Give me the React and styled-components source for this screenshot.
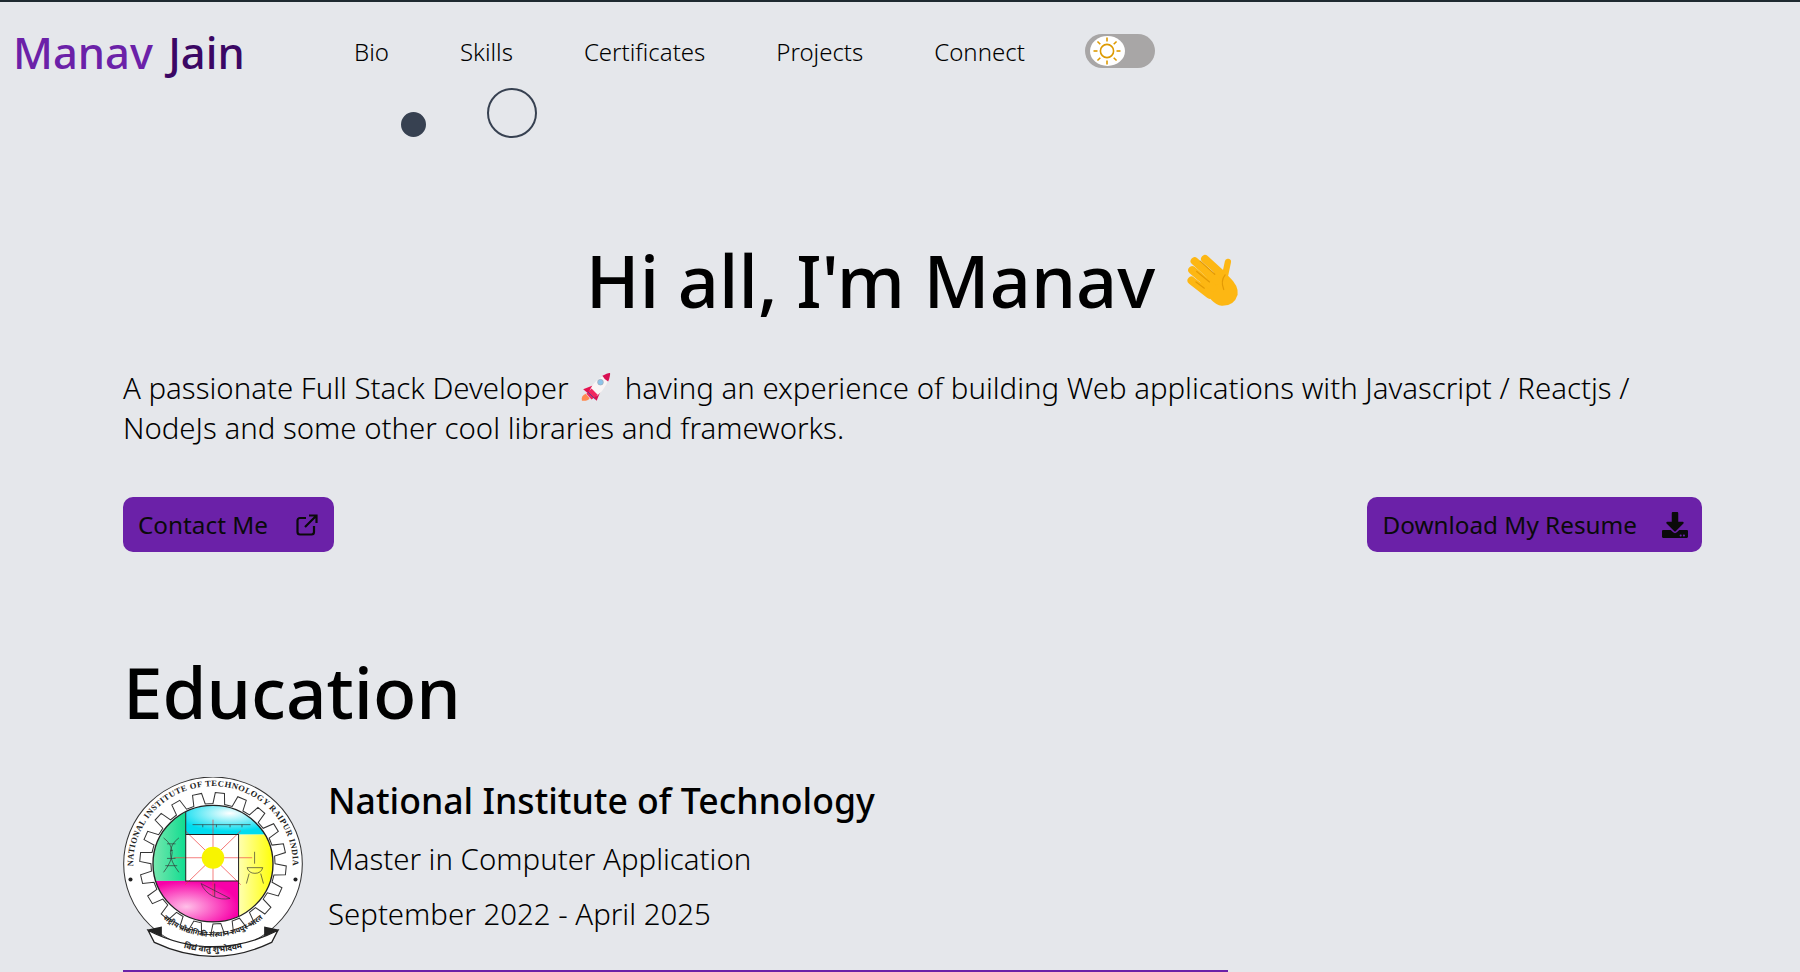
import React from 'react';
import styled, { createGlobalStyle } from 'styled-components';
import { FaDownload } from 'react-icons/fa';

const GlobalStyle = createGlobalStyle`
  html, body {
    margin: 0;
    padding: 0;
    background: #e5e7eb;
    overflow: hidden;
    font-family: 'Noto Sans', 'Open Sans', sans-serif;
    color: #0a0a0a;
  }
`;

const Page = styled.div`
  position: relative;
  height: 972px;
  overflow: hidden;
  box-sizing: border-box;
  border-top: 2px solid #1f2a30;
`;

const Header = styled.header`
  display: flex;
  align-items: center;
  height: 98px;
  padding-left: 13px;
`;

const Logo = styled.div`
  width: 341px;
  margin-top: 2px;
  font-size: 43.5px;
  font-weight: 500;
  word-spacing: 4px;
  color: #6b21a8;
  span {
    color: #3b0764;
  }
`;

const Nav = styled.nav`
  display: flex;
  align-items: center;
  gap: 71px;
  font-size: 24px;
`;

const NavLink = styled.a`
  color: #000;
  font-weight: 300;
`;

const Toggle = styled.div`
  display: flex;
  align-items: center;
  box-sizing: border-box;
  width: 70px;
  height: 34px;
  margin-left: -11px;
  padding-left: 5px;
  border-radius: 17px;
  background: #a8a6a6;
`;

const Knob = styled.div`
  display: flex;
  align-items: center;
  justify-content: center;
  width: 35px;
  height: 30px;
  border-radius: 50%;
  background: #fff;
`;

const Blob = styled.div`
  position: absolute;
  left: ${(p) => p.$left}px;
  top: ${(p) => p.$top}px;
  width: ${(p) => p.$size}px;
  height: ${(p) => p.$size}px;
  box-sizing: border-box;
  border-radius: 50%;
  border: 2px solid #374151;
  background: ${(p) => (p.$filled ? '#374151' : 'transparent')};
`;

const Main = styled.main`
  padding: 0 98px 0 123px;
`;

const Hero = styled.section`
  padding-top: 132px;
`;

const Title = styled.h1`
  display: flex;
  justify-content: center;
  align-items: center;
  gap: 32px;
  margin: 0;
  font-size: 72px;
  line-height: 96px;
  font-weight: 500;
  color: #000;
`;

const Intro = styled.p`
  margin: 40px 0 0;
  font-size: 29.4px;
  line-height: 40px;
  font-weight: 300;
  color: #000;
`;

const Inline = styled.span`
  display: inline-block;
  height: 30px;
  vertical-align: -4px;
  margin: -4px 5px -4px 4px;
`;

const Buttons = styled.div`
  display: flex;
  justify-content: space-between;
  margin-top: 49px;
`;

const Button = styled.a`
  display: flex;
  align-items: center;
  gap: ${(p) => p.$gap}px;
  height: 55px;
  padding: 0 ${(p) => p.$right}px 0 15px;
  border-radius: 10px;
  background: #6b21a8;
  color: #0a0a0a;
  font-size: 24.3px;
`;

const Education = styled.section`
  margin-top: 88px;
`;

const Heading = styled.h2`
  margin: 0;
  font-size: 71px;
  line-height: 104px;
  font-weight: 500;
  color: #000;
`;

const School = styled.div`
  display: flex;
  gap: 25px;
  width: 1105px;
  margin-top: 33px;
  padding-bottom: 12px;
  border-bottom: 2px solid #6b21a8;
`;

const SchoolInfo = styled.div`
  display: flex;
  flex-direction: column;
  margin-top: -2px;
`;

const SchoolName = styled.div`
  font-size: 35.6px;
  line-height: 50px;
  font-weight: 500;
  color: #000;
`;

const SchoolLine = styled.div`
  margin-top: ${(p) => p.$top}px;
  font-size: 29.4px;
  line-height: 49px;
  font-weight: 300;
  color: #000;
`;

const SunIcon = () => (
  <svg width="30" height="30" viewBox="-15 -15 30 30" fill="none" stroke="#dd9a00" strokeWidth="1.6">
    <circle r="6.6" />
    {[0, 45, 90, 135, 180, 225, 270, 315].map((a) => (
      <line key={a} x1="0" y1="-9.5" x2="0" y2="-13.5" transform={`rotate(${a})`} />
    ))}
  </svg>
);

const ExternalIcon = () => (
  <svg width="22" height="22" viewBox="0 0 22 22" fill="none" stroke="#0a0a0a" strokeWidth="2.2">
    <path d="M10 4H4a2.5 2.5 0 0 0-2.5 2.5V18A2.5 2.5 0 0 0 4 20.500h11.500A2.500 2.500 0 0 0 18 18v-6" />
    <path d="M9 13 L20 2 M13 1.500 H20.500 V9" />
  </svg>
);

const WaveHand = () => (
  <svg width="52" height="54" viewBox="80 45 150 155" fill="none" strokeLinecap="round">
    <path d="M118 130 L165 95 L200 112 Q230 140 226 165 Q216 198 180 197 Q150 195 118 130Z" fill="#fdb713" />
    <g stroke="#fdb713" strokeWidth="23">
      <line x1="102" y1="68" x2="165" y2="125" />
      <line x1="132" y1="62" x2="185" y2="110" />
      <line x1="95" y1="94" x2="155" y2="145" />
      <line x1="93" y1="124" x2="145" y2="165" />
      <line x1="198" y1="70" x2="188" y2="118" strokeWidth="18" />
    </g>
    <g stroke="#e39a05" strokeWidth="3.500">
      <line x1="118" y1="68" x2="160" y2="106" />
      <line x1="108" y1="98" x2="145" y2="128" />
      <line x1="106" y1="128" x2="130" y2="146" />
      <path d="M190 108 Q176 125 186 150" />
    </g>
  </svg>
);

const Rocket = () => (
  <svg width="32" height="32" viewBox="60 35 100 100">
    <path d="M66 128 Q62 112 78 106 L90 120 Q84 130 66 128Z" fill="#ff8a50" />
    <path d="M70 92 L100 80 L94 112 Z" fill="#e5124f" />
    <path d="M106 92 L130 84 L112 128 L96 112Z" fill="#d80f52" />
    <path d="M90 96 Q102 62 152 42 Q150 82 112 114 Z" fill="#f9f5f5" />
    <path d="M130 50 Q146 40 154 41 Q155 50 148 68 Q136 62 130 50Z" fill="#d80f52" />
    <path d="M80 106 L96 90 L116 110 L96 124 Z" fill="#f0265f" />
    <line x1="84" y1="100" x2="106" y2="122" stroke="#5a3d8a" strokeWidth="3" />
    <circle cx="124" cy="70" r="9" fill="#8cc4ea" stroke="#a8a8b0" strokeWidth="2" />
  </svg>
);

// gear outline for the college seal, worked out from the tooth count
const gearPath = () => {
  const teeth = 20;
  const pts = [];
  for (let i = 0; i < teeth; i++) {
    const step = (Math.PI * 2) / teeth;
    const a = i * step;
    [
      [a, 182],
      [a + step * 0.1, 215],
      [a + step * 0.5, 215],
      [a + step * 0.6, 182],
    ].forEach(([t, r]) => pts.push(`${(Math.cos(t) * r).toFixed(1)} ${(Math.sin(t) * r).toFixed(1)}`));
  }
  return `M${pts.join(' L')}Z`;
};

const Seal = () => (
  <svg width="180" height="181" viewBox="-264 -262 528 547" preserveAspectRatio="none" style={{ flexShrink: 0 }}>
    <defs>
      <clipPath id="inner">
        <circle r="176" />
      </clipPath>
      <radialGradient id="cyan" cx="50%" cy="30%" r="60%">
        <stop offset="0" stopColor="#ffffff" />
        <stop offset="1" stopColor="#00dcef" />
      </radialGradient>
      <radialGradient id="pink" cx="40%" cy="60%" r="60%">
        <stop offset="0" stopColor="#ffc0e8" />
        <stop offset="1" stopColor="#f800a8" />
      </radialGradient>
      <linearGradient id="green" x1="0" x2="1">
        <stop offset="0" stopColor="#7ce8b0" />
        <stop offset="1" stopColor="#10dc90" />
      </linearGradient>
      <linearGradient id="yellow" x1="0" x2="1">
        <stop offset="0" stopColor="#ffffb0" />
        <stop offset="1" stopColor="#ffff00" />
      </linearGradient>
      <path id="topArc" d="M-232 30 A234 234 0 1 1 232 30" />
      <path id="lowArc" d="M-212 60 A220 220 0 0 0 212 60" />
      <path id="ribbonArc" d="M-130 238 Q0 296 130 238" />
    </defs>
    <circle r="262" fill="#fff" stroke="#333" strokeWidth="3" />
    <path d={gearPath()} fill="#fff" stroke="#333" strokeWidth="3" />
    <g clipPath="url(#inner)">
      <rect x="-180" y="-180" width="360" height="360" fill="#fff" />
      <rect x="-80" y="-180" width="260" height="92" fill="url(#cyan)" />
      <rect x="-180" y="-180" width="100" height="232" fill="url(#green)" />
      <rect x="75" y="-88" width="105" height="270" fill="url(#yellow)" />
      <rect x="-180" y="52" width="255" height="130" fill="url(#pink)" />
      <g stroke="#f04040" strokeWidth="2">
        {[0, 45, 90, 135, 180, 225, 270, 315].map((a) => (
          <line key={a} x1="0" y1="0" x2="115" y2="0" transform={`translate(0 -18) rotate(${a})`} />
        ))}
      </g>
      <circle cy="-18" r="33" fill="#f8f400" />
      <g stroke="#333" strokeWidth="2" fill="none">
        <path d="M-145 -78 Q-95 -40 -145 26 M-100 -78 Q-150 -40 -100 26 M-135 -60 H-110 M-125 -40 H-118 M-135 -16 H-110 M-140 6 H-105" />
        <path d="M-60 -118 H110 M-30 -118v8 M10 -118v8 M50 -118v8 M85 -118v8" />
        <path d="M-35 60 A75 75 0 0 0 50 105 Z M5 60 L5 100" />
        <path d="M122 -36 V0 M100 12 A24 24 0 0 0 146 12 Z M106 30 L98 60 M140 30 L148 60" />
      </g>
      <path d="M-80 -180 V52 H75 V-88 H-80 M75 52 V180" fill="none" stroke="#222" strokeWidth="3" />
    </g>
    <circle r="176" fill="none" stroke="#222" strokeWidth="4" />
    <text fill="#222" fontFamily="Liberation Serif, serif" fontSize="25" fontWeight="700" letterSpacing="1.500">
      <textPath href="#topArc" startOffset="50%" textAnchor="middle">NATIONAL INSTITUTE OF TECHNOLOGY RAIPUR INDIA</textPath>
    </text>
    <circle cx="-242" cy="48" r="6" fill="#222" />
    <circle cx="242" cy="48" r="6" fill="#222" />
    <path d="M-190 202 Q0 300 190 202 L172 238 Q0 322 -172 238Z" fill="#fff" stroke="#222" strokeWidth="4" />
    <path d="M-195 200 L-150 190 L-150 220Z M195 200 L150 190 L150 220Z" fill="#222" />
    <text fill="#222" fontFamily="Noto Sans, serif" fontSize="24" fontWeight="700">
      <textPath href="#ribbonArc" startOffset="50%" textAnchor="middle">विद्यं वातु शुभोदयम</textPath>
    </text>
    <text fill="#222" fontFamily="Noto Sans, serif" fontSize="22" fontWeight="700">
      <textPath href="#lowArc" startOffset="50%" textAnchor="middle">राष्ट्रीय प्रौद्योगिकी संस्थान रायपुर भारत</textPath>
    </text>
  </svg>
);

export default function App() {
  return (
    <Page>
      <GlobalStyle />
      <Header>
        <Logo>Manav <span>Jain</span></Logo>
        <Nav>
          <NavLink>Bio</NavLink>
          <NavLink>Skills</NavLink>
          <NavLink>Certificates</NavLink>
          <NavLink>Projects</NavLink>
          <NavLink>Connect</NavLink>
          <Toggle>
            <Knob>
              <SunIcon />
            </Knob>
          </Toggle>
        </Nav>
      </Header>
      <Blob $left={401} $top={110} $size={25} $filled />
      <Blob $left={487} $top={86} $size={50} />
      <Main>
        <Hero>
          <Title>Hi all, I'm Manav <WaveHand /></Title>
          <Intro>
            A passionate Full Stack Developer <Inline><Rocket /></Inline> having an experience of building Web applications with Javascript / Reactjs / NodeJs and some other cool libraries and frameworks.
          </Intro>
          <Buttons>
            <Button $gap={28} $right={16}>Contact Me <ExternalIcon /></Button>
            <Button $gap={25} $right={14}>Download My Resume <FaDownload size={26} /></Button>
          </Buttons>
        </Hero>
        <Education>
          <Heading>Education</Heading>
          <School>
            <Seal />
            <SchoolInfo>
              <SchoolName>National Institute of Technology</SchoolName>
              <SchoolLine $top={10}>Master in Computer Application</SchoolLine>
              <SchoolLine $top={6}>September 2022 - April 2025</SchoolLine>
            </SchoolInfo>
          </School>
        </Education>
      </Main>
    </Page>
  );
}
